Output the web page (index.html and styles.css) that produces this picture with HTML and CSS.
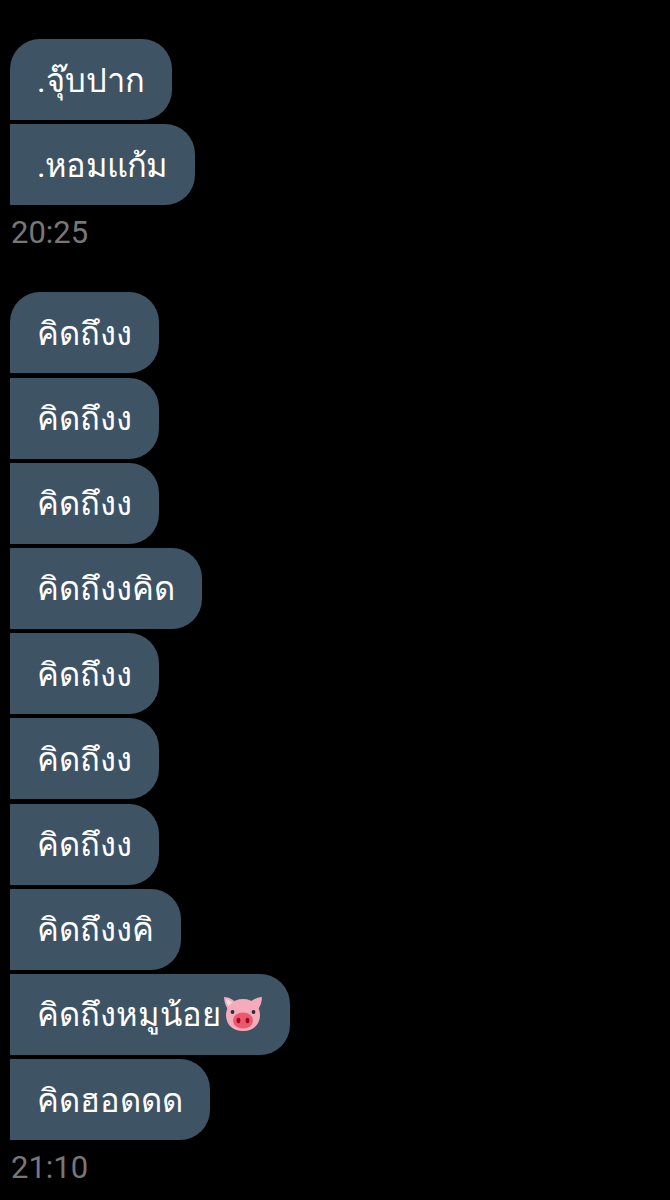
FILE: index.html
```html
<!DOCTYPE html>
<html lang="th">
<head>
    <meta charset="UTF-8">
    <title>Chat</title>
    <link rel="stylesheet" href="styles.css">
</head>
<body>
    <div class="chat">
        <div class="group">
            <div class="bubble">.จุ๊บปาก</div>
            <div class="bubble tight">.หอมแก้ม</div>
            <div class="time">20:25</div>
        </div>
        <div class="group">
            <div class="bubble">คิดถึงง</div>
            <div class="bubble">คิดถึงง</div>
            <div class="bubble">คิดถึงง</div>
            <div class="bubble">คิดถึงงคิด</div>
            <div class="bubble">คิดถึงง</div>
            <div class="bubble">คิดถึงง</div>
            <div class="bubble">คิดถึงง</div>
            <div class="bubble">คิดถึงงคิ</div>
            <div class="bubble">คิดถึงหมูน้อย<svg class="pig" viewBox="0 0 40 36">
                <path fill="#f4abba" d="M1 1 C6 1 11 4 13 7 L6 15 C3 11 1 6 1 1 Z M39 1 C34 1 29 4 27 7 L34 15 C37 11 39 6 39 1 Z"/>
                <path fill="#f7dbe2" d="M3 3 C6 4 8 5 10 7 L6 11 C5 9 3 6 3 3 Z"/>
                <path fill="#f4abba" d="M20 3 C30 3 37 10 37 19 C37 29 30 35 20 35 C10 35 3 29 3 19 C3 10 10 3 20 3 Z"/>
                <circle fill="#292f33" cx="9.5" cy="16" r="1.9"/>
                <circle fill="#292f33" cx="30.5" cy="16" r="1.9"/>
                <ellipse fill="#ea596e" cx="20" cy="24.5" rx="10" ry="8"/>
                <ellipse fill="#a0041e" cx="15.5" cy="24.5" rx="1.9" ry="2.8"/>
                <ellipse fill="#a0041e" cx="24.5" cy="24.5" rx="1.9" ry="2.8"/>
            </svg></div>
            <div class="bubble">คิดฮอดดด</div>
            <div class="time">21:10</div>
        </div>
    </div>
</body>
</html>
```

FILE: styles.css
```css
* {
    box-sizing: border-box;
    margin: 0;
    padding: 0;
}

body {
    background-color: #000;
    font-family: Roboto, "Noto Sans", "DejaVu Sans", sans-serif;
    height: 1200px;
    overflow: hidden;
}

.chat {
    display: flex;
    flex-direction: column;
    gap: 41px;
    padding: 39px 0 0 10px;
}

.group {
    display: flex;
    flex-direction: column;
    align-items: flex-start;
    gap: 4.2px;
}

.bubble {
    display: flex;
    align-items: center;
    height: 81px;
    padding: 0 27px 0 27px;
    background-color: #3e5364;
    border-radius: 0 30px 30px 0;
    color: #fff;
    font-size: 32.7px;
    white-space: nowrap;
}

.bubble:first-child {
    border-top-left-radius: 30px;
}

.tight {
    letter-spacing: -0.7px;
}

.pig {
    width: 40px;
    height: 36px;
    margin-left: 2px;
}

.time {
    color: #777;
    font-size: 31px;
    line-height: 36px;
    margin-top: 6px;
    padding-left: 1px;
}
```
